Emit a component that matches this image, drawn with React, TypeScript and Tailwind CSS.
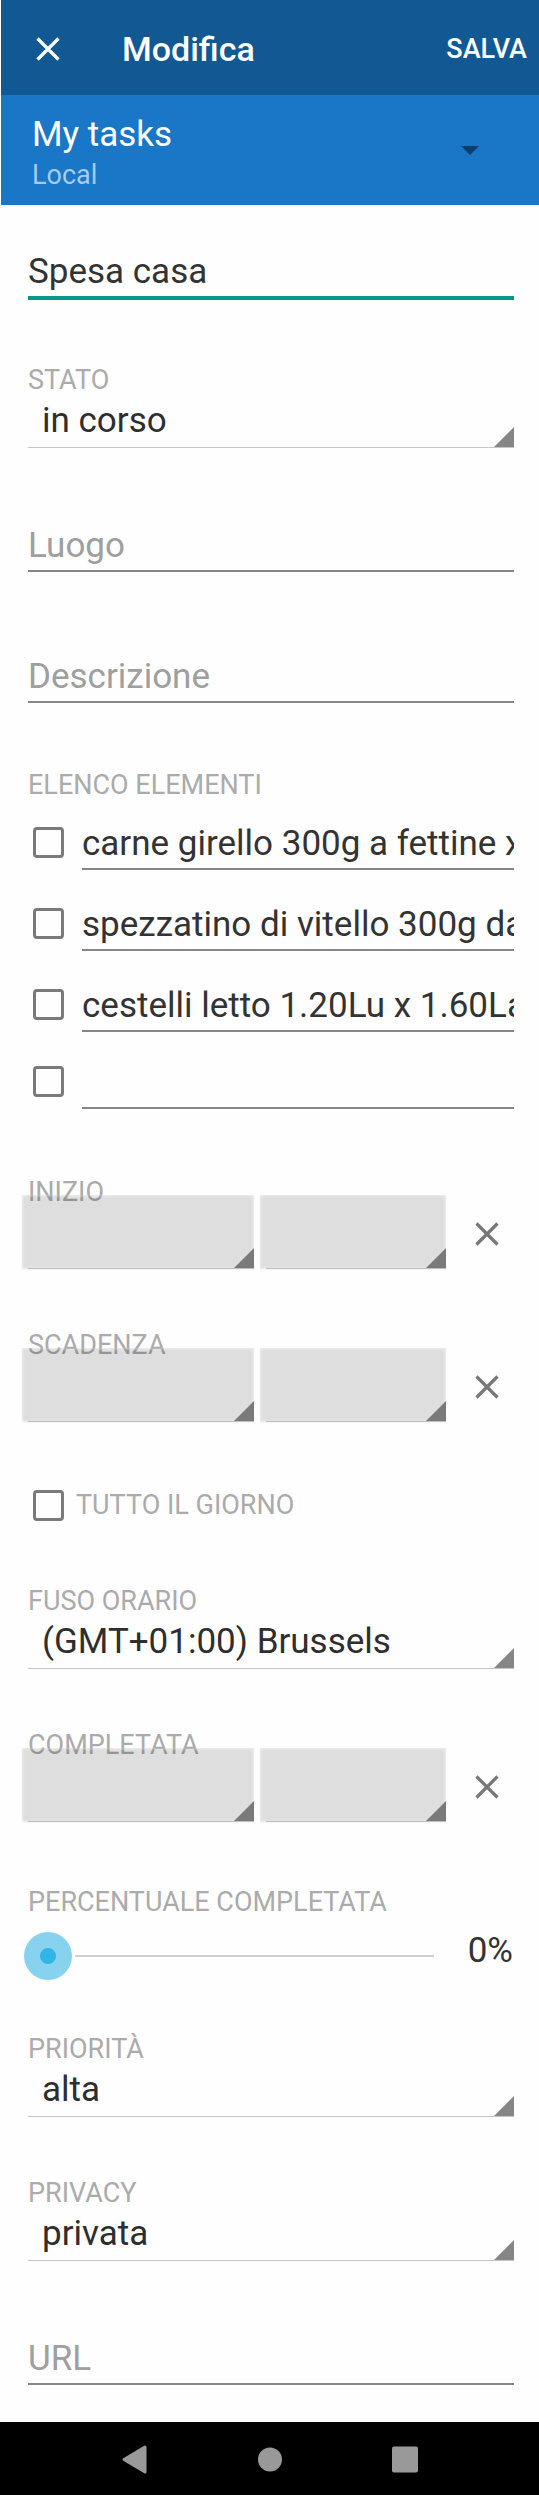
import { useState } from "react";

const CAPTION = "block text-[27px] leading-[32px] text-[#ababab] uppercase";
const TEXT_INPUT =
  "block w-full min-w-0 h-12 pb-[3px] border-b-2 border-[#868686] bg-transparent text-[35px] leading-[42px] text-[#333] placeholder:text-[#9f9f9f] placeholder:opacity-100 outline-none";

function Cross({ className }: { className?: string }) {
  return (
    <svg viewBox="0 0 24 24" className={className} fill="none" stroke="currentColor" strokeWidth="3.2" aria-hidden="true">
      <path d="M1.5 1.5 22.5 22.5M22.5 1.5 1.5 22.5" />
    </svg>
  );
}

function Corner({ className }: { className?: string }) {
  return (
    <svg viewBox="0 0 20 20" className={className} aria-hidden="true">
      <path d="M20 0V20H0Z" fill="currentColor" />
    </svg>
  );
}

function CheckBox({ id, label }: { id: string; label?: string }) {
  return (
    <input
      id={id}
      type="checkbox"
      aria-label={label}
      className="size-[31px] shrink-0 appearance-none rounded-[4px] border-3 border-[#7a7a7a] checked:bg-[#7a7a7a]"
    />
  );
}

function SelectField({ id, label, options, className }: { id: string; label: string; options: string[]; className: string }) {
  return (
    <div className={className}>
      <label htmlFor={id} className={CAPTION}>
        {label}
      </label>
      <div className="relative">
        <select
          id={id}
          className="block h-[52px] w-full appearance-none border-b border-[#c6c6c6] bg-transparent pr-8 pb-0.5 pl-[14px] text-[35px] leading-[42px] text-[#2e2e2e] outline-none"
        >
          {options.map((o) => (
            <option key={o}>{o}</option>
          ))}
        </select>
        <Corner className="pointer-events-none absolute right-0 bottom-px size-5 text-[#868686]" />
      </div>
    </div>
  );
}

function PickerButton({ label }: { label: string }) {
  return (
    <button
      type="button"
      aria-label={label}
      className="flex h-[74px] items-end bg-black/[0.125] pl-[6px] shadow-[inset_0_0_3px_1px_rgba(255,255,255,0.5),0_1px_2px_rgba(0,0,0,0.04)]"
    >
      <span className="flex flex-1 justify-end border-b border-[#bdbdbd]">
        <Corner className="size-5 text-[#7a7a7a]" />
      </span>
    </button>
  );
}

function DateTimeField({ label, className }: { label: string; className: string }) {
  return (
    <div className={className} role="group" aria-label={label}>
      <span className={CAPTION}>{label}</span>
      <div className="relative -mt-[13px] -ml-[6px] grid grid-cols-[232fr_192fr_68fr] items-center">
        <PickerButton label={`${label}: data`} />
        <div className="ml-[6px] grid">
          <PickerButton label={`${label}: ora`} />
        </div>
        <button
          type="button"
          aria-label={`${label}: cancella`}
          className="flex h-full items-center justify-center pt-1 pl-[14px] text-[#777]"
        >
          <Cross className="size-6" />
        </button>
      </div>
    </div>
  );
}

const ITEMS = [
  "carne girello 300g a fettine x",
  "spezzatino di vitello 300g da",
  "cestelli letto 1.20Lu x 1.60La",
];

function ChecklistRow({ index, text, className = "" }: { index: number; text: string; className?: string }) {
  return (
    <li className={`flex gap-[18px] pl-[5px] ${className}`}>
      <div className="pt-[5px]">
        <CheckBox id={`item-${index}`} label={`Elemento ${index}`} />
      </div>
      <input type="text" aria-label={`Testo elemento ${index}`} defaultValue={text} className={TEXT_INPUT} />
    </li>
  );
}

export default function App() {
  const [percent, setPercent] = useState(0);
  return (
    <div className="bg-[#fefefe] font-['Roboto',sans-serif]">
      <header className="ml-px text-white">
        <div className="flex h-[95px] items-center bg-[#125993] pt-0.5 pr-3 pl-[35px]">
          <button type="button" aria-label="Chiudi">
            <Cross className="size-6" />
          </button>
          <h1 className="ml-[62px] flex-1 text-[34px] leading-10 font-medium">Modifica</h1>
          <button type="button" className="text-[27px] leading-8 font-medium uppercase">
            Salva
          </button>
        </div>
        <button type="button" className="flex h-[110px] w-full items-center bg-[#1a76c7] pt-1 pr-[60px] pl-[31px] text-left">
          <span className="flex flex-1 flex-col gap-[3px]">
            <span className="text-[35px] leading-[42px]">My tasks</span>
            <span className="text-[27px] leading-8 text-[#a6cbec]">Local</span>
          </span>
          <svg viewBox="0 0 18 9" className="mb-1 h-[9px] w-[18px]" aria-hidden="true">
            <path d="M0 0H18L9 9Z" fill="#0e3d68" />
          </svg>
        </button>
      </header>

      <main className="pt-[45px] pr-[25px] pb-[37px] pl-7">
        <input
          type="text"
          aria-label="Titolo"
          defaultValue="Spesa casa"
          className="block h-[50px] w-full border-b-4 border-[#06998a] bg-transparent pb-[3px] text-[35px] leading-[42px] text-[#333] outline-none"
        />
        <SelectField id="stato" label="Stato" options={["in corso", "completata"]} className="mt-16" />
        <input type="text" aria-label="Luogo" placeholder="Luogo" className={`mt-[76px] ${TEXT_INPUT}`} />
        <input type="text" aria-label="Descrizione" placeholder="Descrizione" className={`mt-[83px] ${TEXT_INPUT}`} />

        <section className="mt-[66px]">
          <h2 className={CAPTION}>Elenco elementi</h2>
          <ul className="mt-[21px]">
            {ITEMS.map((text, i) => (
              <ChecklistRow key={text} index={i + 1} text={text} className="mb-[33px]" />
            ))}
            <ChecklistRow index={4} text="" className="-mt-1" />
          </ul>
        </section>

        <DateTimeField label="Inizio" className="mt-[67px]" />
        <DateTimeField label="Scadenza" className="mt-[60px]" />
        <div className="mt-[67px] flex items-center gap-3 pl-[5px]">
          <CheckBox id="giorno" />
          <label htmlFor="giorno" className={CAPTION}>
            Tutto il giorno
          </label>
        </div>
        <SelectField id="fuso" label="Fuso orario" options={["(GMT+01:00) Brussels", "(GMT+00:00) London"]} className="mt-16" />
        <DateTimeField label="Completata" className="mt-[60px]" />

        <div className="mt-16">
          <label htmlFor="percentuale" className={CAPTION}>
            Percentuale completata
          </label>
          <div className="mt-3 -ml-1 flex h-[50px] items-start">
            <input
              id="percentuale"
              type="range"
              min={0}
              max={100}
              value={percent}
              onChange={(e) => setPercent(Number(e.target.value))}
              className="mt-0.5 h-12 min-w-0 flex-1 appearance-none bg-transparent outline-none [&::-webkit-slider-runnable-track]:h-0.5 [&::-webkit-slider-runnable-track]:bg-[#cfcfcf] [&::-webkit-slider-thumb]:-mt-[23px] [&::-webkit-slider-thumb]:size-12 [&::-webkit-slider-thumb]:appearance-none [&::-webkit-slider-thumb]:rounded-full [&::-webkit-slider-thumb]:bg-[radial-gradient(circle,#33b5e5_7.5px,#87d3ef_8.5px)] [&::-webkit-slider-thumb]:shadow-[0_0_0_3px_#fefefe]"
            />
            <output htmlFor="percentuale" className="w-20 pr-px text-right text-[35px] leading-[42px] text-[#333]">
              {percent}%
            </output>
          </div>
        </div>

        <SelectField id="priorita" label="Priorità" options={["alta", "media", "bassa"]} className="mt-[53px]" />
        <SelectField id="privacy" label="Privacy" options={["privata", "pubblica"]} className="mt-[60px]" />
        <input type="url" aria-label="URL" placeholder="URL" className={`mt-[76px] ${TEXT_INPUT}`} />
      </main>

      <nav className="flex h-[73px] items-center justify-center gap-[95px] bg-black text-[#999]" aria-label="Sistema">
        <button type="button" aria-label="Indietro">
          <svg viewBox="0 0 40 40" className="size-10" aria-hidden="true">
            <path d="M30 8V33L9 20.500Z" fill="currentColor" stroke="currentColor" strokeWidth="3" strokeLinejoin="round" />
          </svg>
        </button>
        <button type="button" aria-label="Home">
          <svg viewBox="0 0 40 40" className="size-10" aria-hidden="true">
            <circle cx="20" cy="20.5" r="12" fill="currentColor" />
          </svg>
        </button>
        <button type="button" aria-label="Recenti">
          <svg viewBox="0 0 40 40" className="size-10" aria-hidden="true">
            <rect x="7" y="7.5" width="26" height="26" rx="2" fill="currentColor" />
          </svg>
        </button>
      </nav>
    </div>
  );
}
